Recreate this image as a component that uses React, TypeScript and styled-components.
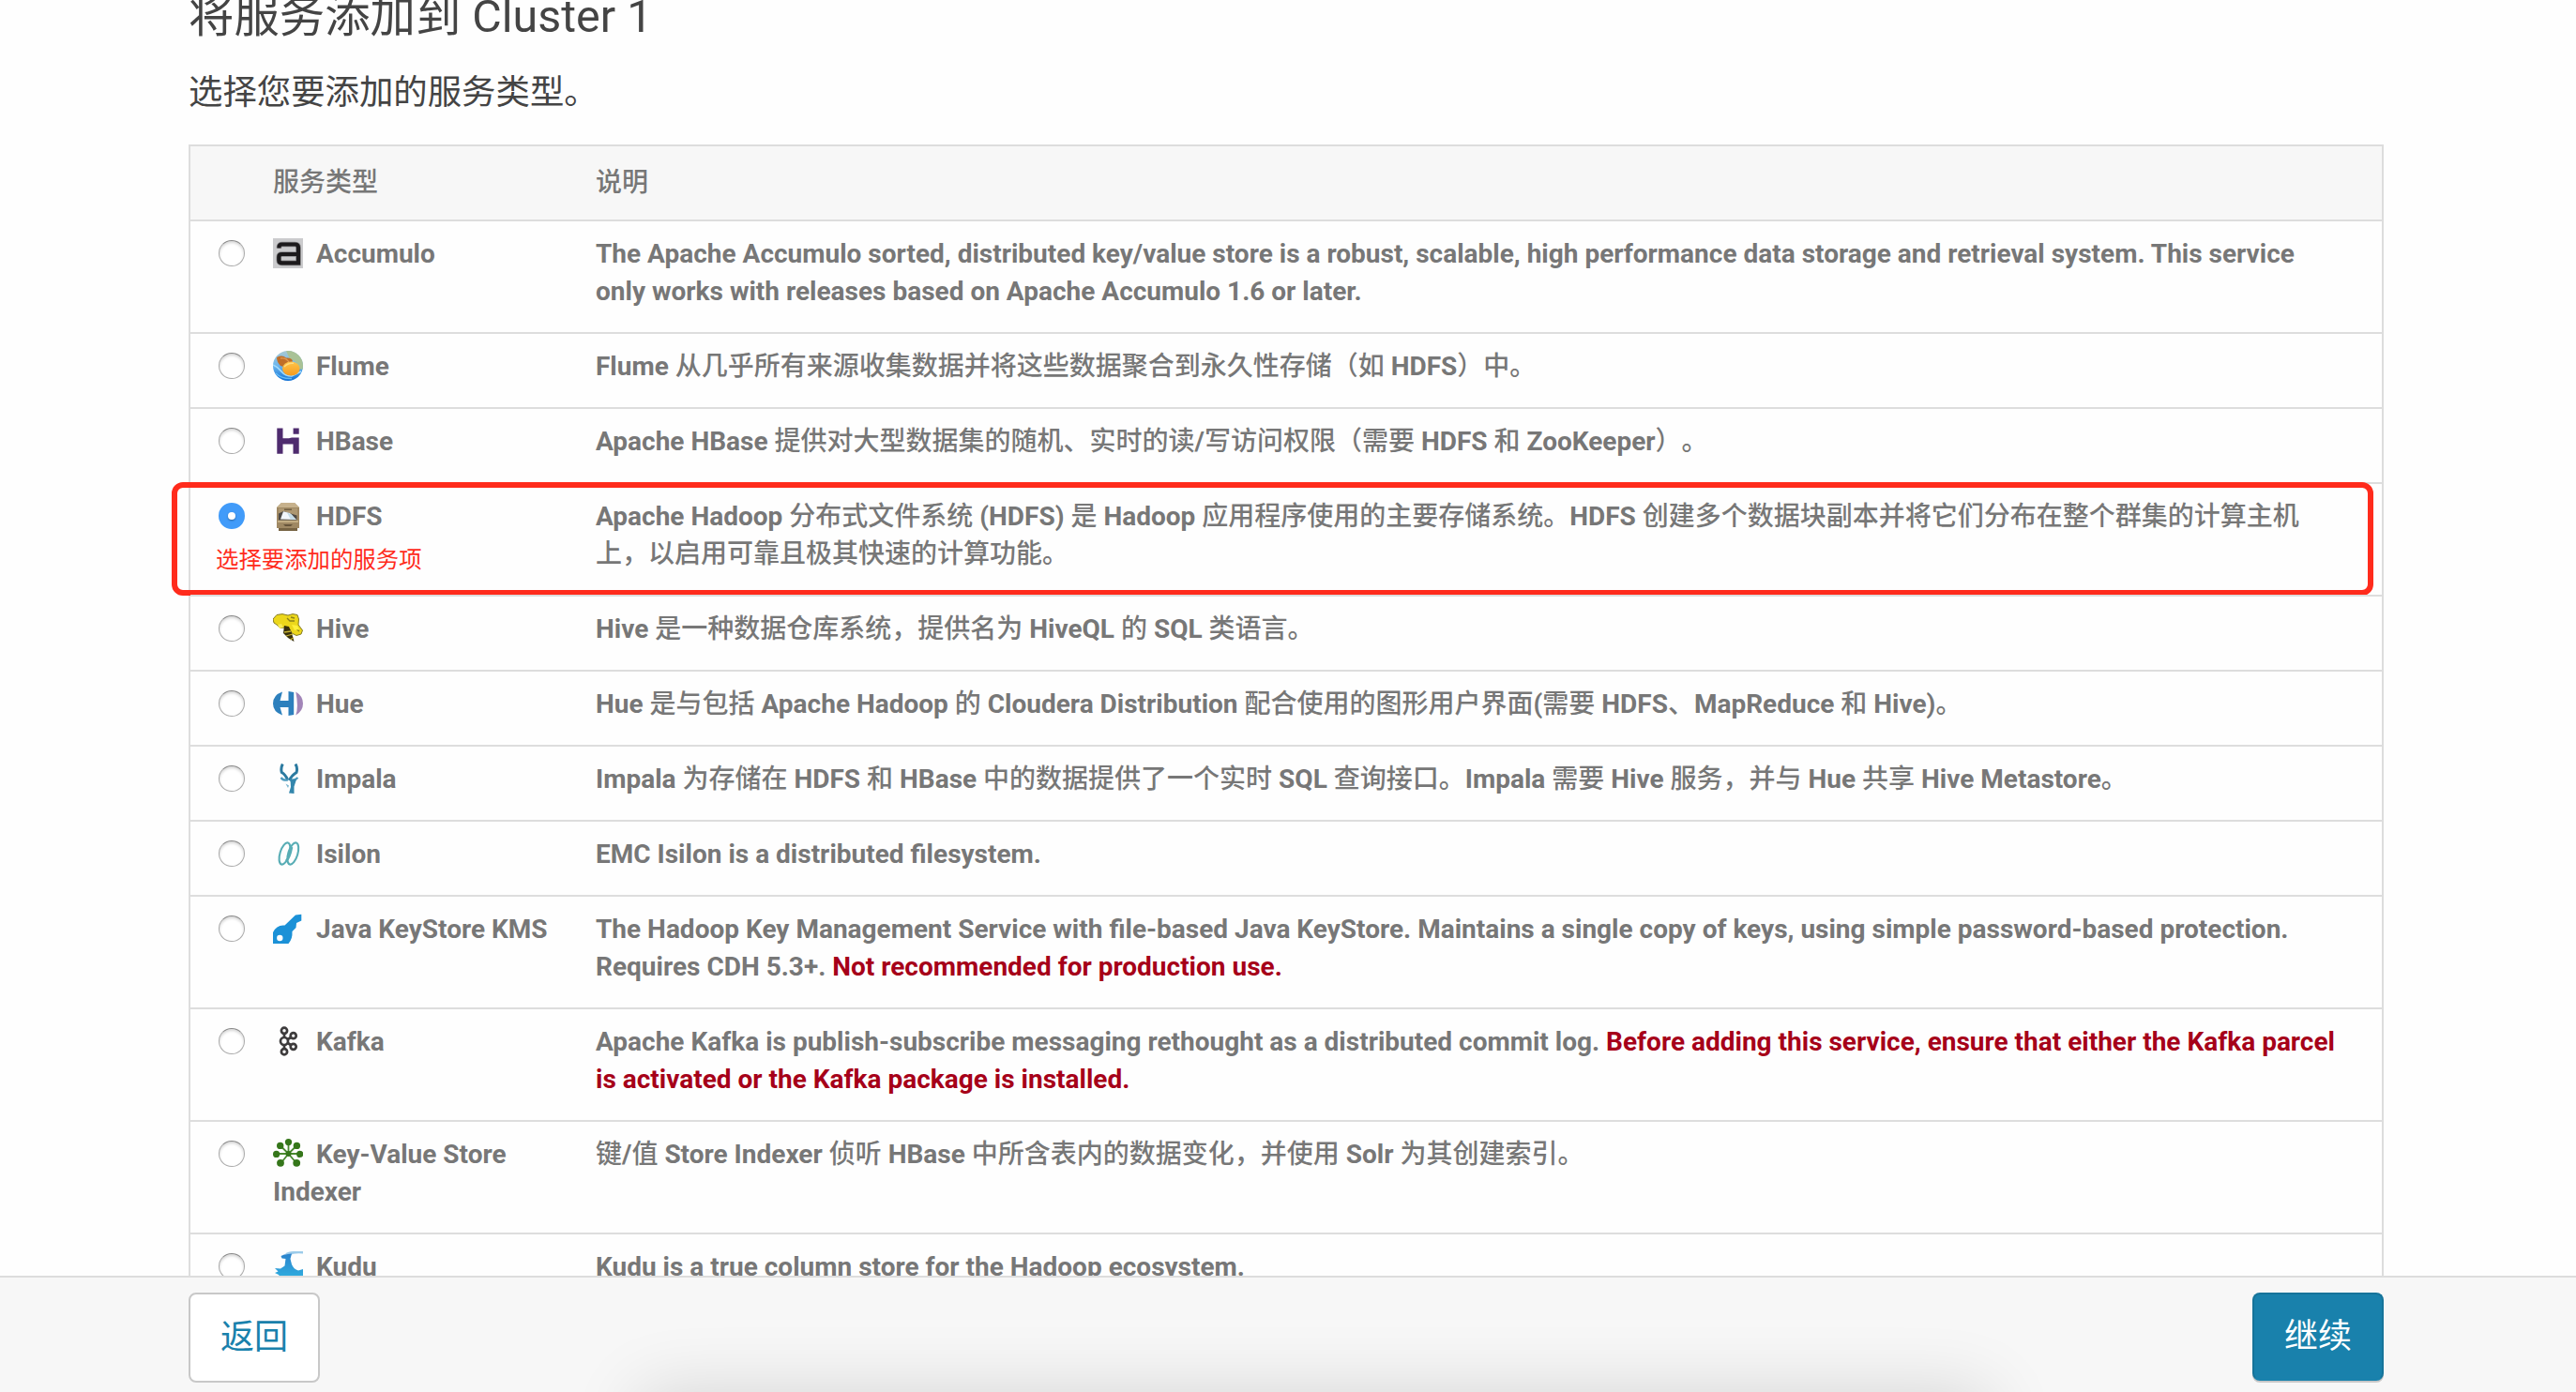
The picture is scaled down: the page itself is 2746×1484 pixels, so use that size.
import React from "react";
import styled, { createGlobalStyle } from "styled-components";

const Global = createGlobalStyle`
  *, *::before, *::after { box-sizing: border-box; }
  html, body { margin: 0; padding: 0; background: #fff; }
  body {
    font-family: Roboto, "Noto Sans CJK SC", sans-serif;
    text-spacing-trim: space-all;
    overflow: hidden;
  }
`;

const Page = styled.div`
  height: 1484px;
  display: flex;
  flex-direction: column;
  overflow: hidden;
  background: #fefefe;
`;

const Main = styled.main`
  flex: 1;
  min-height: 0;
  overflow: hidden;
  padding: 0 205px 0 201px;
`;

const Title = styled.h1`
  margin: -15px 0 0;
  font-size: 48.4px;
  line-height: 66px;
  font-weight: 400;
  color: #444;
`;

const Subtitle = styled.p`
  margin: 20px 0 27px;
  font-size: 36.4px;
  line-height: 56px;
  color: #444;
`;

const Table = styled.div`
  border: 2px solid #ddd;
  border-bottom: 0;
  color: #777;
  font-size: 28px;
  line-height: 40px;
  font-weight: 700;
`;

const Columns = styled.div`
  display: grid;
  grid-template-columns: 72px 344px 1fr;
`;

const Row = styled(Columns)`
  position: relative;
  border-top: 2px solid #ddd;
`;

const Cell = styled.div`
  padding: 15px 16px 23px;
`;

const HeadRow = styled(Columns)`
  background: #f7f7f7;
  font-weight: 500;
  ${Cell} { padding: 19px 16px; }
`;

const DescriptionCell = styled(Cell)`
  padding-right: 42px;
`;

const RadioCell = styled.div`
  padding: 20px 0 0 30px;
`;

const Radio = styled.span<{ $on?: boolean }>`
  display: flex;
  align-items: center;
  justify-content: center;
  width: 28px;
  height: 28px;
  border-radius: 50%;
  border: ${(p) => (p.$on ? "0" : "1px solid #aaa")};
  border-top-color: #888;
  background: ${(p) => (p.$on ? "#419bf9" : "#fff")};
  box-shadow: ${(p) => (p.$on ? "none" : "inset 0 2px 3px rgba(0, 0, 0, 0.16)")};
`;

const RadioDot = styled.span`
  width: 8px;
  height: 8px;
  border-radius: 50%;
  background: #fff;
  box-shadow: 0 1px 2px rgba(0, 0, 0, 0.35);
`;

const IconSvg = styled.svg`
  display: inline-block;
  width: 32px;
  height: 32px;
  margin: -8px 14px -8px 0;
  vertical-align: 2px;
`;

const Han = styled.span`
  font-weight: 500;
`;

const Warning = styled.strong`
  color: #a60019;
  font-weight: 700;
`;

const Highlight = styled.div`
  position: absolute;
  left: -20px;
  right: 9px;
  top: -2px;
  height: 121px;
  border: 6.5px solid #ff2b1c;
  border-radius: 12px;
`;

const Note = styled.span`
  position: absolute;
  left: 27px;
  top: 64px;
  font-size: 24.4px;
  line-height: 34px;
  font-weight: 400;
  color: #ff2b1c;
  white-space: nowrap;
`;

const Footer = styled.footer`
  position: relative;
  flex: none;
  height: 124px;
  padding: 16px 205px 0 201px;
  display: flex;
  justify-content: space-between;
  align-items: flex-start;
  background: #f7f7f7;
  border-top: 2px solid #ddd;
  overflow: hidden;
`;

const WindowShadow = styled.div`
  position: absolute;
  left: 684px;
  width: 1434px;
  top: 124px;
  height: 100px;
  box-shadow: 0 0 76px 2px rgba(0, 0, 0, 0.14);
`;

const Button = styled.button<{ $primary?: boolean }>`
  width: 140px;
  height: ${(p) => (p.$primary ? 94 : 96)}px;
  padding: 0;
  border: 2px solid ${(p) => (p.$primary ? "#16749a" : "#c8c8c8")};
  ${(p) => p.$primary && "border-bottom-color: #1981ac; box-shadow: 0 2px 0 #c8c8c8;"}
  border-radius: 8px;
  background: ${(p) => (p.$primary ? "#1981ac" : "#fff")};
  color: ${(p) => (p.$primary ? "#fff" : "#1981ac")};
  font-family: inherit;
  font-size: 36px;
  line-height: 52px;
`;

const icons: Record<string, React.ReactNode> = {
  accumulo: (
    <>
      <rect width="32" height="32" fill="#cbcbcd" />
      <path d="M6.5 10.5V9.3Q6.5 6.5 9.5 6.5H23.5Q27 6.5 27 10V26.4H9.5Q6.3 26.4 6.3 23.5V20Q6.3 17 9.5 17H27" fill="none" stroke="#8c8c8e" strokeWidth="5.6" />
      <path d="M6.5 10.5V9.3Q6.5 6.5 9.5 6.5H23.5Q27 6.5 27 10V26.4H9.5Q6.3 26.4 6.3 23.5V20Q6.3 17 9.5 17H27" fill="none" stroke="#1c1a1c" strokeWidth="4.2" />
    </>
  ),
  flume: (
    <>
      <defs>
        <clipPath id="flumeClip"><circle cx="16" cy="16" r="16" /></clipPath>
        <linearGradient id="flumeBg" x1="0" y1="0" x2="0" y2="1">
          <stop offset="0" stopColor="#a9c9d2" />
          <stop offset="0.5" stopColor="#6cb6ee" />
          <stop offset="1" stopColor="#0f6fd4" />
        </linearGradient>
        <linearGradient id="flumeOrange" x1="0" y1="0" x2="0" y2="1">
          <stop offset="0" stopColor="#ffc54a" />
          <stop offset="1" stopColor="#f59a1e" />
        </linearGradient>
      </defs>
      <g clipPath="url(#flumeClip)">
        <rect width="32" height="32" fill="url(#flumeBg)" />
        <path d="M14 0H32V20L27 19Q26 10 18 9Z" fill="#a9c296" />
        <path d="M0 15Q5 17 9 22T20 27L30 22" fill="none" stroke="#a4dcfa" strokeWidth="1.6" />
        <path d="M3 24Q9 30 20 29.5" fill="none" stroke="#63baf4" strokeWidth="1.4" />
        <path d="M4 7Q10 4 14 7.500Q20 7 21 11L14 18L8 16Q4 12 4 7Z" fill="#c06e28" />
        <path d="M8 8Q14 7 17 12" fill="none" stroke="#e0984e" strokeWidth="1.3" />
        <ellipse cx="19.300" cy="19" rx="9.3" ry="7.400" fill="url(#flumeOrange)" />
        <path d="M12 17Q16 12.500 22 13.300" fill="none" stroke="#ffdb80" strokeWidth="1.4" />
      </g>
    </>
  ),
  hbase: <path d="M4.300 2.600H10.500V13.300H17L20 12.600H27.700V29.800H21.500V19.500H10.500V29.800H4.300ZM21.600 2.600H27.700V8.700H21.600Z" fill="#4e2b6e" />,
  hdfs: (
    <>
      <path d="M9 2H23L28 7V29H26V32H6V29H4V7Z" fill="#9f8863" />
      <path d="M9 2H23L28 7H4Z" fill="#c6b18c" />
      <rect x="6" y="8" width="20" height="15" fill="#ad9771" />
      <path d="M12 8.500H20V10H12Z" fill="#6e5c40" />
      <path d="M6 13.500L11 11L25.500 15.500V20.500H6Z" fill="#4d4a46" />
      <path d="M8 19.500L11 11.200L18 13L25 20Z" fill="#f2f7fb" />
      <path d="M15 12.400L20 14.500L24 20H19Z" fill="#c4dce8" />
      <path d="M5 21H27V23H5Z" fill="#c3ad83" />
      <path d="M11 25H21L19 27H13Z" fill="#66543a" />
      <path d="M6 29H26V32H6Z" fill="#776343" />
    </>
  ),
  hive: (
    <>
      <path d="M0 6L4 1.500L10 .6L16 2L21 .6L26 1.500L27.500 6L27 12L31.500 18L30 22L25 23.500L20 21L18 17L13 15L8 15.500L4 12L1 10Z" fill="#ecd71b" stroke="#857b25" strokeWidth="1" />
      <path d="M15 5L18 8L23 8M19 4L23 5M24 16L28 19" fill="none" stroke="#8c8219" strokeWidth="1.3" />
      <path d="M12 13L17 14L20 21L22.500 30L16 26L11 21Z" fill="#38300b" />
      <path d="M12 20L19 19M14 24L21 22M18 28L22 26" stroke="#c8b432" strokeWidth="1.3" />
      <path d="M5 12L9 11L11 15L7 16Z" fill="#f8eb55" />
      <path d="M20 12L26 13L28 17L23 18Z" fill="#fff03a" />
    </>
  ),
  hue: (
    <>
      <path d="M10 3.500L7.500 13H16.500V3L22.200 4V28L16.500 29V20H7.500L10 28.500Q0 25 0 16T10 3.500Z" fill="#2d80bd" />
      <path d="M24.300 3.500Q32 8 32 16T24.300 28.500Q27.500 20 24.300 3.500Z" fill="#a285b8" />
    </>
  ),
  impala: (
    <>
      <path d="M10.300 .5Q8 5 9.300 9.500Q13 11.500 15.500 17M24 .5Q26.500 5 25 9.500Q19.500 13 17.500 18" fill="none" stroke="#2b7aa0" strokeWidth="3" />
      <path d="M8.500 15Q11 18.500 16 17.500M26.500 15Q23 18.500 18 18" fill="none" stroke="#4d9abd" strokeWidth="2.200" />
      <path d="M18.500 16.500L25 17L22.500 24.500V32L17 31.500L19 25Z" fill="#3386ac" />
      <path d="M13.500 21.500L17 23.500L16 26Z" fill="#79b5ce" />
    </>
  ),
  isilon: (
    <g fill="none" stroke="#58adb5" strokeWidth="2.100">
      <ellipse cx="12.500" cy="16" rx="5" ry="12" transform="rotate(17 12.500 16)" />
      <ellipse cx="21.300" cy="16" rx="5" ry="12" transform="rotate(17 21.300 16)" />
      <path d="M14 24Q18 20 20 9" strokeWidth="2.600" />
    </g>
  ),
  kms: (
    <>
      <path d="M30.300 .7L24 1.500L12.500 12.500Q4 11.500 0 20V32H16.500Q21 27 20.500 19L24.500 15L25 10L30.300 7.500Z" fill="#1b91d7" />
      <circle cx="7.300" cy="26" r="3.200" fill="#fff" />
    </>
  ),
  kafka: (
    <g fill="none" stroke="#3d3b3c" strokeWidth="2.700">
      <path d="M12 8V24M15 14.500L19 12M15 17.500L19 20" />
      <circle cx="12" cy="4.800" r="3.100" />
      <circle cx="12" cy="16" r="4" fill="#fff" />
      <circle cx="12" cy="27.200" r="3.100" />
      <circle cx="21.700" cy="10.200" r="3" />
      <circle cx="21.700" cy="21.800" r="3" />
    </g>
  ),
  kv: (
    <g fill="#35761a" stroke="#4a8a2f" strokeWidth="1.800">
      <path d="M16.500 16V4M16.500 16L8 7.500M16.500 16L25 7.500M16.500 16H4M16.500 16H29M16.500 16L8.500 26M16.500 16L25 26" />
      <g stroke="none">
        <circle cx="16.500" cy="16" r="3" />
        <circle cx="16.500" cy="3.600" r="3.600" />
        <circle cx="7.700" cy="7.400" r="3.700" />
        <circle cx="25.400" cy="7.400" r="3.700" />
        <circle cx="3.600" cy="16.400" r="3.600" />
        <circle cx="28.700" cy="16.400" r="3.600" />
        <circle cx="8" cy="25.800" r="3.900" />
        <circle cx="25.200" cy="25.800" r="3.900" />
      </g>
    </g>
  ),
  kudu: (
    <>
      <defs>
        <linearGradient id="kuduBody" x1="0" y1="0" x2="0" y2="1">
          <stop offset="0" stopColor="#2b82cc" />
          <stop offset="1" stopColor="#30b4e2" />
        </linearGradient>
      </defs>
      <path d="M32 0H22Q16 0 13 2.500L18 4.500Q22 1.500 32 2.500Z" fill="#9ccbea" />
      <path d="M8.500 5L12 3.500L20 2.500L18.500 8L20 14Q22 19 27 20.500L32 19V32H20Q10 31 6 25L2 23L5.500 21.500L2 18L8 18.500L12.500 15.500L13.500 8L9.500 7.500Z" fill="url(#kuduBody)" />
    </>
  ),
};

type Service = { id: string; name: string; text: string; warning?: string; selected?: boolean };

const services: Service[] = [
  { id: "accumulo", name: "Accumulo", text: "The Apache Accumulo sorted, distributed key/value store is a robust, scalable, high performance data storage and retrieval system. This service only works with releases based on Apache Accumulo 1.6 or later." },
  { id: "flume", name: "Flume", text: "Flume 从几乎所有来源收集数据并将这些数据聚合到永久性存储（如 HDFS）中。" },
  { id: "hbase", name: "HBase", text: "Apache HBase 提供对大型数据集的随机、实时的读/写访问权限（需要 HDFS 和 ZooKeeper）。" },
  { id: "hdfs", name: "HDFS", selected: true, text: "Apache Hadoop 分布式文件系统 (HDFS) 是 Hadoop 应用程序使用的主要存储系统。HDFS 创建多个数据块副本并将它们分布在整个群集的计算主机上，以启用可靠且极其快速的计算功能。" },
  { id: "hive", name: "Hive", text: "Hive 是一种数据仓库系统，提供名为 HiveQL 的 SQL 类语言。" },
  { id: "hue", name: "Hue", text: "Hue 是与包括 Apache Hadoop 的 Cloudera Distribution 配合使用的图形用户界面(需要 HDFS、MapReduce 和 Hive)。" },
  { id: "impala", name: "Impala", text: "Impala 为存储在 HDFS 和 HBase 中的数据提供了一个实时 SQL 查询接口。Impala 需要 Hive 服务，并与 Hue 共享 Hive Metastore。" },
  { id: "isilon", name: "Isilon", text: "EMC Isilon is a distributed filesystem." },
  { id: "kms", name: "Java KeyStore KMS", text: "The Hadoop Key Management Service with file-based Java KeyStore. Maintains a single copy of keys, using simple password-based protection. Requires CDH 5.3+.", warning: "Not recommended for production use." },
  { id: "kafka", name: "Kafka", text: "Apache Kafka is publish-subscribe messaging rethought as a distributed commit log.", warning: "Before adding this service, ensure that either the Kafka parcel is activated or the Kafka package is installed." },
  { id: "kv", name: "Key-Value Store Indexer", text: "键/值 Store Indexer 侦听 HBase 中所含表内的数据变化，并使用 Solr 为其创建索引。" },
  { id: "kudu", name: "Kudu", text: "Kudu is a true column store for the Hadoop ecosystem." },
];

// Han runs are set one weight lighter than the bold Latin text around them.
const HAN_RUN = /([\u3000-\u9fff\uff00-\uffef]+)/;

function MixedText({ children }: { children: string }) {
  return (
    <>
      {children.split(HAN_RUN).map((part, i) => (i % 2 ? <Han key={i}>{part}</Han> : part))}
    </>
  );
}

export default function App() {
  return (
    <Page lang="zh-CN">
      <Global />
      <Main>
        <Title>将服务添加到 Cluster 1</Title>
        <Subtitle>选择您要添加的服务类型。</Subtitle>
        <Table>
          <HeadRow>
            <span />
            <Cell>服务类型</Cell>
            <Cell>说明</Cell>
          </HeadRow>
          {services.map((s) => (
            <Row key={s.id}>
              <RadioCell>
                <Radio $on={s.selected}>{s.selected && <RadioDot />}</Radio>
              </RadioCell>
              <Cell>
                <IconSvg viewBox="0 0 32 32">{icons[s.id]}</IconSvg>
                {s.name}
              </Cell>
              <DescriptionCell>
                <MixedText>{s.text}</MixedText>
                {s.warning && <> <Warning>{s.warning}</Warning></>}
              </DescriptionCell>
              {s.selected && (
                <>
                  <Highlight />
                  <Note>选择要添加的服务项</Note>
                </>
              )}
            </Row>
          ))}
        </Table>
      </Main>
      <Footer>
        <WindowShadow />
        <Button>返回</Button>
        <Button $primary>继续</Button>
      </Footer>
    </Page>
  );
}
